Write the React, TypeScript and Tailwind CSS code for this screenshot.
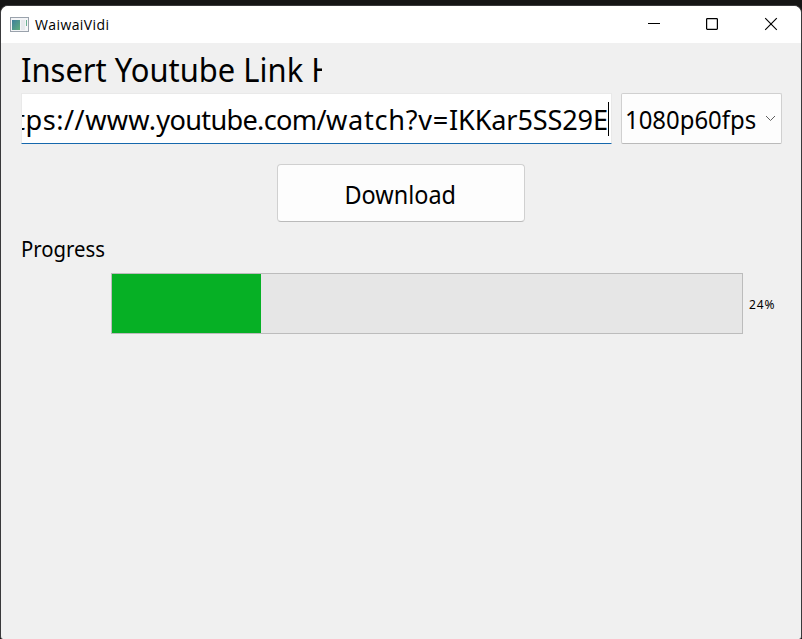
const FONT = "font-['Noto_Sans','DejaVu_Sans',sans-serif]";

function AppIcon() {
  return (
    <svg width="19" height="15" viewBox="0 0 19 15" shapeRendering="crispEdges">
      <defs>
        <linearGradient id="pane" x1="0" y1="0" x2="1" y2="1">
          <stop offset="0" stopColor="#3f7f9c" />
          <stop offset="1" stopColor="#5fae7c" />
        </linearGradient>
      </defs>
      <rect x="0.5" y="0.5" width="18" height="14" fill="#f4f5f7" stroke="#9aa2ac" />
      <rect x="2" y="3" width="8" height="10" fill="url(#pane)" />
      <rect x="11" y="3" width="4" height="10" fill="#e6e8ec" />
      <rect x="16" y="3" width="1" height="6" fill="#6cb092" />
    </svg>
  );
}

function TitleBar() {
  return (
    <header className="flex h-[37px] shrink-0 items-center bg-white pl-[9px]">
      <AppIcon />
      <span className="ml-[6px] font-['Open_Sans',sans-serif] text-[14px] leading-5 tracking-[0.4px]">WaiwaiVidi</span>
      <div className="ml-auto flex h-full">
        <svg width="58" height="37" viewBox="0 0 58 37" fill="none" stroke="#000">
          <path d="M22 17.5h12" />
        </svg>
        <svg width="59" height="37" viewBox="0 0 59 37" fill="none" stroke="#000" strokeWidth="1.25">
          <rect x="22.6" y="12.6" width="10.8" height="10.8" rx="0.8" />
        </svg>
        <svg width="58" height="37" viewBox="0 0 58 37" fill="none" stroke="#000" strokeWidth="1.15">
          <path d="M22.2 12.2l11.6 11.6M33.8 12.2l-11.6 11.6" />
        </svg>
      </div>
    </header>
  );
}

export default function App() {
  return (
    <div className={`h-[639px] w-[802px] overflow-hidden bg-[#151515] pt-[5px] text-black ${FONT}`}>
      <div className="flex h-[634px] flex-col overflow-hidden rounded-lg rounded-b-[3px] border-x border-t border-[#39393b] bg-[#f0f0f0]">
        <TitleBar />
        <main className="flex flex-col pl-5">
          <h1 className="mt-[6px] h-[44px] w-[301px] overflow-hidden whitespace-nowrap text-[33px] leading-[42px]">
            <span className="inline-block origin-left scale-x-[0.937]">Insert Youtube Link Here</span>
          </h1>
          <div className="flex gap-[9px]">
            <div className="flex h-[51px] w-[591px] shrink-0 items-center justify-end overflow-hidden rounded-[1px] border border-x-[#e9e9e9] border-b-[#1668ad] border-t-[#e9e9e9] bg-white pr-[2px]">
              <span className="mt-[2px] origin-right scale-x-[0.986] whitespace-nowrap text-[27.5px] leading-9">
                <span className="tracking-[0.5px]">https://</span>
                <span className="tracking-[0.25px]">www.</span>
                <span className="tracking-[-0.68px]">youtube.com/</span>
                <span className="tracking-[0.75px]">watch?v=</span>
                <span className="tracking-[-0.15px]">IKKar5SS29E</span>
              </span>
              <span className="h-[34px] w-px shrink-0 bg-black" />
            </div>
            <div className="flex h-[51px] w-[161px] shrink-0 items-center rounded-[2px] border border-[#d0d0d0] border-b-[#bababa] bg-[#fdfdfd] pl-[3px]">
              <div className="w-[134px]">
                <span className="inline-block origin-left scale-x-[0.92] whitespace-nowrap text-[26px] leading-9">1080p60fps</span>
              </div>
              <svg className="ml-auto mr-[5px] shrink-0" width="11" height="7" viewBox="0 0 11 7" fill="none" stroke="#606060">
                <path d="M1 1l4.5 4.5L10 1" />
              </svg>
            </div>
          </div>
          <button className="ml-[256px] mt-5 h-[58px] w-[248px] rounded-[4px] border border-[#d0d0d0] border-b-[#bababa] bg-[#fdfdfd] pr-[2px] text-[25.75px] leading-9">
            <span className="mt-px inline-block scale-x-[0.91]">Download</span>
          </button>
          <div className="mt-[12px] h-[30px] text-[21.5px] leading-[30px]">
            <span className="inline-block origin-left scale-x-[0.945]">Progress</span>
          </div>
          <div className="ml-[90px] mt-[9px] flex items-center">
            <div className="h-[61px] w-[632px] border border-[#bcbcbc] bg-[#e6e6e6]">
              <div className="h-full w-[149px] bg-[#06b025]" />
            </div>
            <span className="ml-[6px] mt-[2px] text-[12px] leading-4 tracking-[0.9px]">24%</span>
          </div>
        </main>
      </div>
    </div>
  );
}
